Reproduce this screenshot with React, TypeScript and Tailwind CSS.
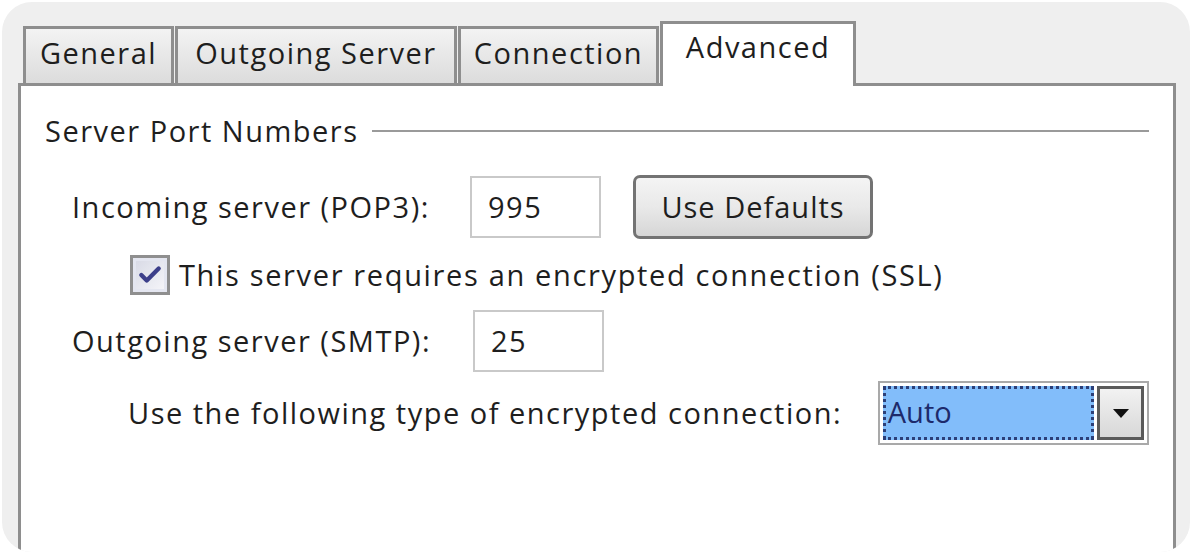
import { Check } from 'lucide-react';

const font = { fontFamily: '"Open Sans", "Noto Sans", sans-serif' };

const tabs = [
  { label: 'General', width: 'w-[151px]' },
  { label: 'Outgoing Server', width: 'w-[282px]' },
  { label: 'Connection', width: 'w-[201px]' },
];

export default function App() {
  return (
    <div className="w-[1192px] h-[554px] bg-white p-[2px] text-[#1e1e1e] text-[29px] tracking-[1.5px]" style={font}>
      <div className="h-full rounded-[30px] bg-[#efefef] overflow-hidden pl-[16px] pr-[14px] pt-[17px]">
        {/* Tabs */}
        <div className="flex items-end h-[64px] pl-[5px]">
          {tabs.map((t) => (
            <div
              key={t.label}
              className={`${t.width} h-[57px] mr-[1px] border-[3px] border-b-0 border-[#8e8e8e] bg-gradient-to-b from-[#f3f3f3] to-[#dcdcdc] flex items-center justify-center leading-none pb-[8px]`}
            >
              {t.label}
            </div>
          ))}
          <div className="w-[196px] h-[65px] -mb-[3px] relative z-10 border-[3px] border-b-0 border-[#8e8e8e] bg-white flex items-start justify-center pt-[8px] leading-none">
            Advanced
          </div>
        </div>

        {/* Panel */}
        <div className="h-[500px] bg-white border-[3px] border-b-0 border-[#8e8e8e] pl-[24px] pr-[24px] pt-[30px]">
          <div className="flex items-center gap-[14px]">
            <span className="leading-none">Server Port Numbers</span>
            <div className="flex-1 h-[2px] bg-[#9a9a9a]" />
          </div>

          <div className="pl-[27px] mt-[30px]">
            <div className="flex items-center h-[64px]">
              <span className="w-[398px] whitespace-nowrap">Incoming server (POP3):</span>
              <div className="w-[131px] h-[62px] border-2 border-[#c9c9c9] flex items-center pl-[16px]">995</div>
              <button className="ml-[32px] w-[240px] h-[64px] rounded-[7px] border-[3px] border-[#737373] bg-gradient-to-b from-[#f4f4f4] via-[#e9e9e9] to-[#d6d6d6] leading-none pb-[2px] tracking-[1px]">
                Use Defaults
              </button>
            </div>

            <div className="flex items-center h-[48px] mt-[12px] pl-[58px] gap-[9px]">
              <div className="w-[40px] h-[40px] border-[3px] border-[#8f8f8f] bg-[#e4e6f0] flex items-center justify-center p-[3px]">
                <div className="w-full h-full bg-gradient-to-br from-[#d9dbe6] to-[#f4f4f8] flex items-center justify-center">
                  <Check className="w-[26px] h-[26px] text-[#3c3f8a]" strokeWidth={4} />
                </div>
              </div>
              <span className="whitespace-nowrap tracking-[1.65px]">This server requires an encrypted connection (SSL)</span>
            </div>

            <div className="flex items-center h-[62px] mt-[11px]">
              <span className="w-[401px] whitespace-nowrap">Outgoing server (SMTP):</span>
              <div className="w-[131px] h-[62px] border-2 border-[#c9c9c9] flex items-center pl-[16px]">25</div>
            </div>

            <div className="flex items-center h-[66px] mt-[8px] pl-[56px]">
              <span className="w-[752px] whitespace-nowrap">Use the following type of encrypted connection:</span>
              <div className="w-[272px] h-[64px] border-2 border-[#a9a9a9] bg-white flex items-stretch p-[3px] tracking-normal">
                <div className="flex-1 flex items-center bg-[#82bdfa] border-[3px] border-dotted border-[#2c3f78] text-[#1d2a6b] pl-[2px] pb-[2px]">
                  Auto
                </div>
                <div className="w-[47px] border-[3px] border-[#5a5a5a] bg-gradient-to-b from-[#f2f2f2] to-[#d8d8d8] flex items-center justify-center ml-[3px]">
                  <svg width="18" height="11" viewBox="0 0 18 11">
                    <path d="M1 1 H17 L9 10 Z" fill="#111" />
                  </svg>
                </div>
              </div>
            </div>
          </div>
        </div>
      </div>
    </div>
  );
}
